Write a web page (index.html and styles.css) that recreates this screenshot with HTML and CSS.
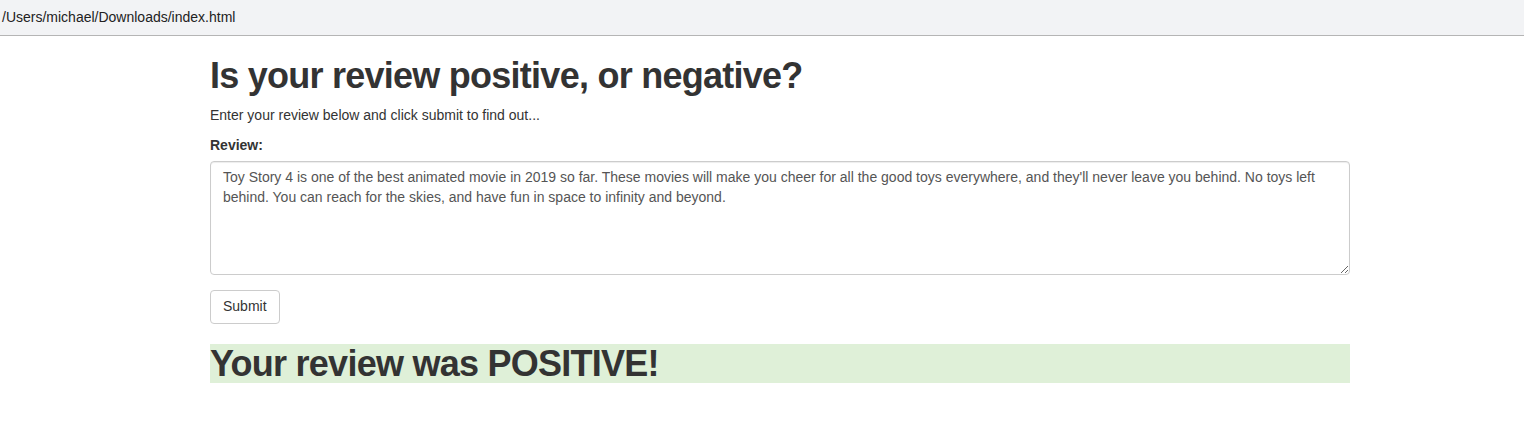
FILE: index.html
```html
<!DOCTYPE html>
<html>
<head>
<meta charset="utf-8">
<title>Review</title>
<link rel="stylesheet" href="styles.css">
</head>
<body>
<div class="urlbar">/Users/michael/Downloads/index.html</div>
<div class="container">
  <h1 class="title">Is your review positive, or negative?</h1>
  <p class="lead-text">Enter your review below and click submit to find out...</p>
  <form class="form">
    <div class="form-group">
      <label class="label" for="review">Review:</label>
      <textarea id="review" class="form-control" rows="5">Toy Story 4 is one of the best animated movie in 2019 so far. These movies will make you cheer for all the good toys everywhere, and they'll never leave you behind. No toys left behind. You can reach for the skies, and have fun in space to infinity and beyond.</textarea>
    </div>
    <button type="button" class="btn">Submit</button>
  </form>
  <h1 class="result">Your review was POSITIVE!</h1>
</div>
</body>
</html>
```
FILE: styles.css
```css
* { box-sizing: border-box; }
html, body { margin: 0; padding: 0; background: #fff; }
body {
  font-family: "Liberation Sans", Arial, Helvetica, sans-serif;
  font-size: 14px;
  line-height: 1.42857;
  color: #333;
}
.urlbar {
  height: 36px;
  background: #f2f3f5;
  border-bottom: 1px solid #b5b5b5;
  padding: 0 0 0 2px;
  font-size: 14px;
  line-height: 35px;
  color: #222;
}
.container {
  width: 1140px;
  margin-left: 210px;
}
.title {
  font-size: 36px;
  font-weight: bold;
  letter-spacing: -0.75px;
  line-height: 1.1;
  margin: 20px 0 10px;
  color: #333;
}
.lead-text { margin: 0 0 10px; }
.form-group { margin-bottom: 15px; }
.label {
  display: inline-block;
  font-weight: bold;
  margin-bottom: 5px;
  max-width: 100%;
}
.form-control {
  display: block;
  width: 100%;
  height: 114px;
  padding: 6px 12px;
  font-family: inherit;
  font-size: 14px;
  line-height: 1.42857;
  color: #555;
  background: #fff;
  border: 1px solid #ccc;
  border-radius: 4px;
  box-shadow: inset 0 1px 1px rgba(0,0,0,.075);
  resize: vertical;
  margin: 0;
}
.btn {
  display: inline-block;
  height: 34px;
  padding: 6px 12px;
  font-family: inherit;
  font-size: 14px;
  line-height: 1.42857;
  color: #333;
  background: #fff;
  border: 1px solid #ccc;
  border-radius: 4px;
  cursor: pointer;
}
.result {
  font-size: 36px;
  font-weight: bold;
  letter-spacing: -0.75px;
  line-height: 1.1;
  margin: 20px 0 10px;
  background: #dff0d8;
  color: #333;
}
```
